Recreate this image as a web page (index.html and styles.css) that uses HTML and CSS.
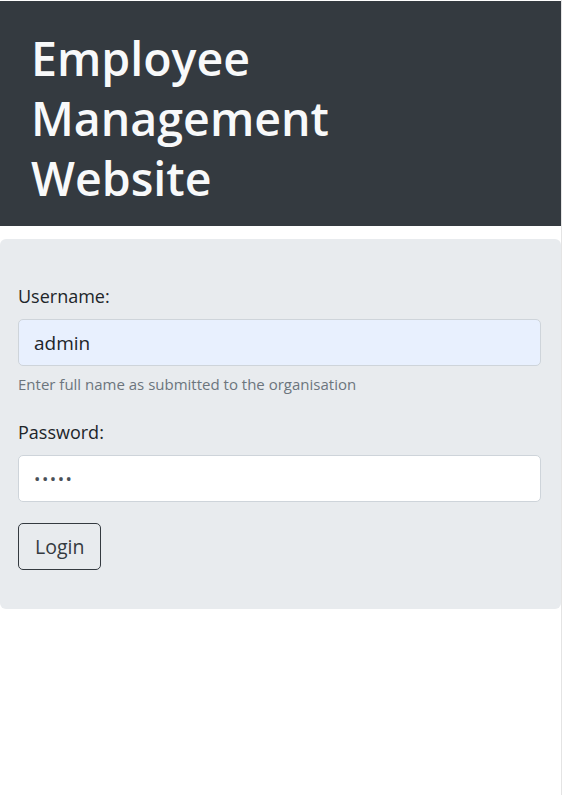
FILE: index.html
```html
<!DOCTYPE html>
<html lang="en">
<head>
<meta charset="utf-8">
<title>Employee Management Website</title>
<link rel="stylesheet" href="styles.css">
</head>
<body>
<div class="page">
  <header class="hero">
    <h1 class="hero-title">Employee Management Website</h1>
  </header>
  <main class="panel">
    <form class="login-form">
      <div class="field">
        <label class="field-label" for="username">Username:</label>
        <input class="field-input field-input-filled" id="username" type="text" value="admin">
        <div class="field-help">Enter full name as submitted to the organisation</div>
      </div>
      <div class="field">
        <label class="field-label" for="password">Password:</label>
        <input class="field-input field-input-secret" id="password" type="password" value="admin">
      </div>
      <button class="login-btn" type="button">Login</button>
    </form>
  </main>
</div>
</body>
</html>
```

FILE: styles.css
```css
* { box-sizing: border-box; }
html, body { margin: 0; padding: 0; background: #fff; }
body {
  font-family: "Open Sans", "Noto Sans", sans-serif;
  color: #212529;
  min-height: 795px;
}
.page {
  width: 562px;
  min-height: 795px;
  padding-top: 1px;
  border-right: 1px solid #e4e4e4;
}
.hero {
  background: #343a40;
  padding: 27px 31px 18px;
}
.hero-title {
  margin: 0;
  max-width: 330px;
  color: #f8f9fa;
  font-size: 46.5px;
  font-weight: 600;
  line-height: 60px;
}
.panel {
  margin-top: 13px;
  background: #e8ebee;
  border-radius: 6px;
  padding: 44px 20px 39px 18px;
}
.login-form { display: flex; flex-direction: column; align-items: flex-start; }
.field { width: 100%; margin-bottom: 21px; }
.field + .field { margin-top: 3px; }
.field-label {
  display: block;
  font-size: 18px;
  line-height: 27px;
  margin-bottom: 9px;
}
.field-input {
  display: block;
  width: 100%;
  height: 47px;
  padding: 0 15px;
  font-family: inherit;
  font-size: 19px;
  color: #212529;
  background: #fff;
  border: 1px solid #ced4da;
  border-radius: 5px;
  outline: none;
}
.field-input-filled { background: #e8f0fe; }
.field-input-secret { letter-spacing: 1.5px; font-size: 17px; color: #495057; }
.field-help {
  margin-top: 7px;
  font-size: 15px;
  line-height: 22px;
  color: #6c757d;
}
.login-btn {
  height: 47px;
  padding: 0 16px;
  font-family: inherit;
  font-size: 19.5px;
  color: #343a40;
  background: transparent;
  border: 1px solid #343a40;
  border-radius: 5px;
}
```
